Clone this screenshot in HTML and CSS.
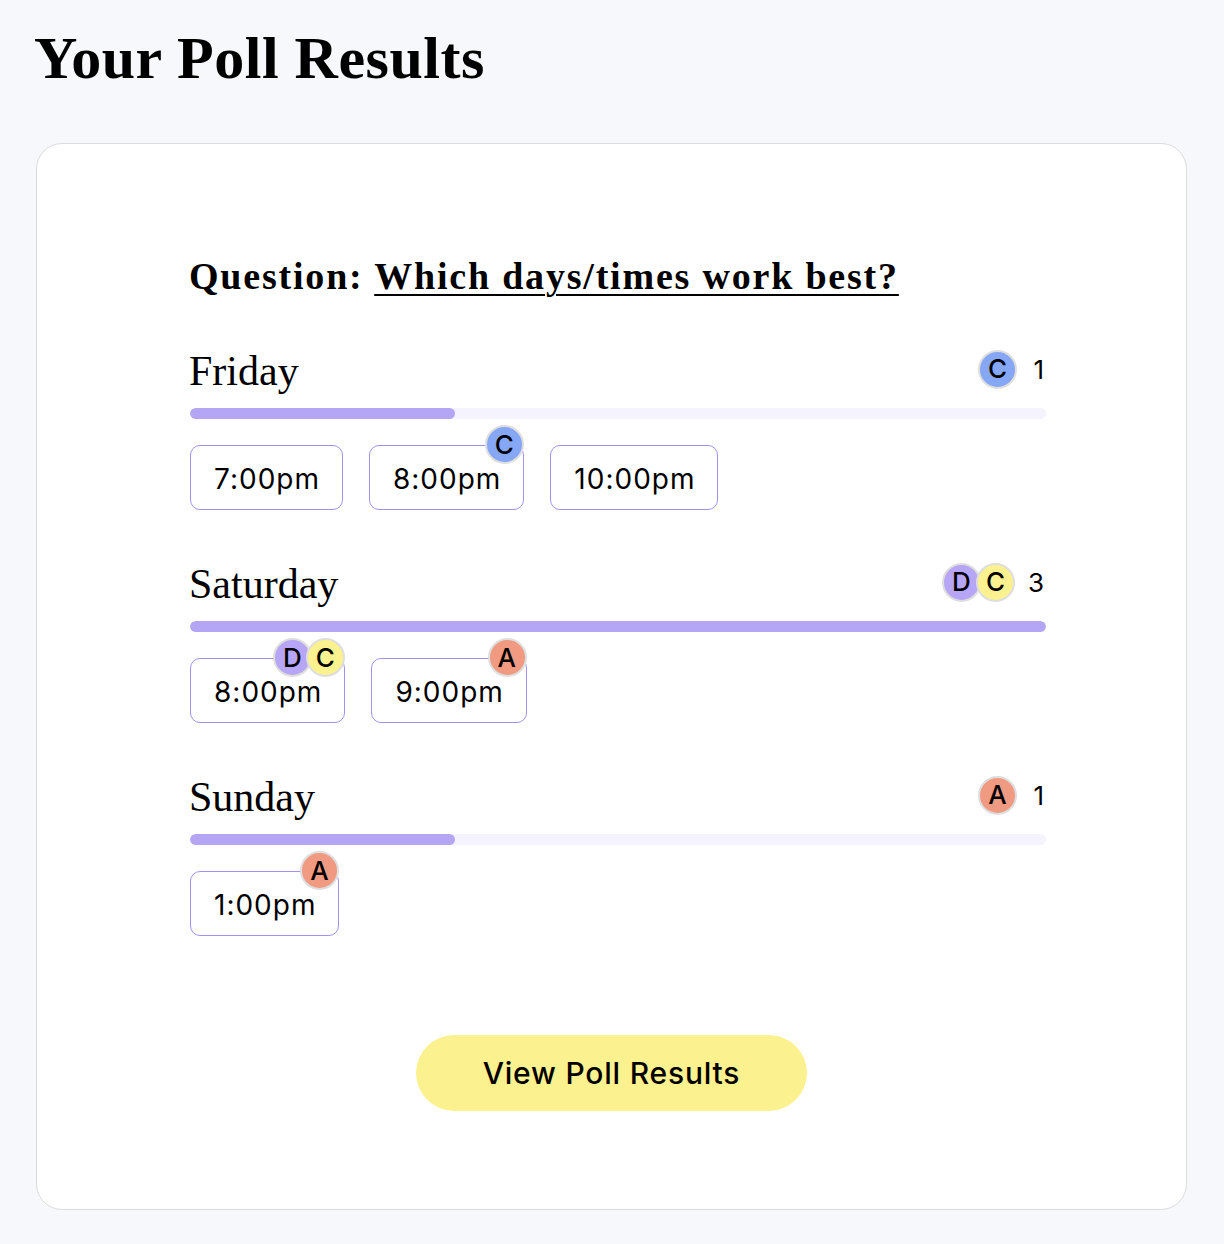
FILE: index.html
```html
<!DOCTYPE html>
<html lang="en">
<head>
<meta charset="utf-8">
<title>Your Poll Results</title>
<link rel="stylesheet" href="styles.css">
</head>
<body>
<h1 class="page-title">Your Poll Results</h1>
<section class="card">
  <div class="poll">
    <h2 class="question">Question: <a class="question-link" href="#">Which days/times work best?</a></h2>

    <div class="day">
      <div class="day-head">
        <span class="day-name">Friday</span>
        <div class="voters">
          <span class="avatar av-blue">C</span>
          <span class="count">1</span>
        </div>
      </div>
      <div class="bar"><div class="fill" style="width:31%"></div></div>
      <div class="times">
        <div class="time">7:00pm</div>
        <div class="time">8:00pm
          <div class="badges"><span class="avatar av-blue">C</span></div>
        </div>
        <div class="time">10:00pm</div>
      </div>
    </div>

    <div class="day">
      <div class="day-head">
        <span class="day-name">Saturday</span>
        <div class="voters">
          <span class="avatar av-purple">D</span><span class="avatar av-yellow">C</span>
          <span class="count">3</span>
        </div>
      </div>
      <div class="bar"><div class="fill" style="width:100%"></div></div>
      <div class="times">
        <div class="time">8:00pm
          <div class="badges"><span class="avatar av-purple">D</span><span class="avatar av-yellow">C</span></div>
        </div>
        <div class="time">9:00pm
          <div class="badges"><span class="avatar av-salmon">A</span></div>
        </div>
      </div>
    </div>

    <div class="day">
      <div class="day-head">
        <span class="day-name">Sunday</span>
        <div class="voters">
          <span class="avatar av-salmon">A</span>
          <span class="count">1</span>
        </div>
      </div>
      <div class="bar"><div class="fill" style="width:31%"></div></div>
      <div class="times">
        <div class="time">1:00pm
          <div class="badges"><span class="avatar av-salmon">A</span></div>
        </div>
      </div>
    </div>
  </div>
  <div class="actions">
    <button class="view-btn" type="button">View Poll Results</button>
  </div>
</section>
</body>
</html>
```

FILE: styles.css
```css
* { box-sizing: border-box; }

html, body {
  background: #f7f8fc;
}

body {
  margin: 0;
  padding: 0 37px 34px 36px;
  font-family: "Inter", "Noto Sans", sans-serif;
  color: #000;
}

.page-title {
  font-family: "Liberation Serif", "DejaVu Serif", serif;
  font-weight: 700;
  font-size: 60px;
  line-height: 64px;
  margin: 26px 0 0 -2px;
  height: 117px;
  letter-spacing: 0.5px;
}

.card {
  background: #fff;
  border: 1px solid #dcdcdf;
  border-radius: 26px;
  padding: 110px 140px 98px 153px;
}

.question {
  font-family: "Liberation Serif", "DejaVu Serif", serif;
  font-weight: 700;
  font-size: 38px;
  line-height: 44px;
  letter-spacing: 1.8px;
  margin: 0 0 45px -1px;
}

.question-link {
  color: #000;
  text-decoration: underline;
  text-decoration-thickness: 2px;
  text-underline-offset: 5px;
}

.day {
  margin-bottom: 46px;
}

.day-head {
  display: flex;
  justify-content: space-between;
  align-items: center;
  height: 52px;
}

.day-name {
  font-family: "Liberation Serif", "DejaVu Serif", serif;
  font-size: 42px;
  line-height: 52px;
  padding-top: 3px;
  margin-left: -1px;
}

.voters {
  display: flex;
  align-items: center;
  padding-right: 2px;
}

.voters .avatar + .avatar {
  margin-left: -5px;
}

.count {
  font-size: 26px;
  margin-left: 13px;
  min-width: 14px;
  text-align: right;
}

.avatar {
  display: inline-flex;
  align-items: center;
  justify-content: center;
  width: 39px;
  height: 39px;
  border-radius: 50%;
  border: 2px solid #dedede;
  font-size: 26px;
  font-weight: 500;
  line-height: 1;
  color: #000;
}

.av-blue { background: #86a6f6; }
.av-purple { background: #b6a6f5; }
.av-yellow { background: #fcf18f; }
.av-salmon { background: #f09a82; }

.bar {
  height: 11px;
  background: #f5f3fd;
  border-radius: 6px;
  margin-top: 13px;
  overflow: hidden;
}

.fill {
  height: 100%;
  background: #b5a6f5;
  border-radius: 6px;
}

.times {
  display: flex;
  gap: 26px;
  margin-top: 26px;
}

.time {
  position: relative;
  display: flex;
  align-items: center;
  justify-content: center;
  height: 65px;
  padding: 2px 22px 0 23px;
  border: 1.5px solid #a192f2;
  border-radius: 10px;
  font-size: 28px;
  letter-spacing: 1px;
}

.badges {
  position: absolute;
  top: -21px;
  right: -1px;
  display: flex;
}

.badges .avatar + .avatar {
  margin-left: -6px;
}

.actions {
  display: flex;
  justify-content: center;
  margin-top: 99px;
  margin-left: -13px;
}

.view-btn {
  font-family: "Inter", "Noto Sans", sans-serif;
  font-size: 30px;
  font-weight: 500;
  letter-spacing: 0.8px;
  color: #000;
  background: #fcf18f;
  border: none;
  border-radius: 38px;
  width: 391px;
  height: 76px;
  cursor: pointer;
}
```
